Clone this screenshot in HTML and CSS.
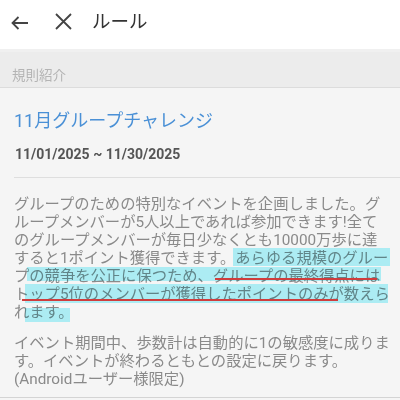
FILE: index.html
```html
<!DOCTYPE html>
<html lang="ja">
<head>
<meta charset="utf-8">
<link rel="stylesheet" href="styles.css">
</head>
<body>
<div class="app">
  <header class="topbar">
    <svg class="icon-back" width="18" height="14" viewBox="0 0 18 14">
      <path d="M17 7 H1.5 M7.5 1 L1.5 7 L7.5 13" fill="none" stroke="#444" stroke-width="1.8" stroke-linecap="butt" stroke-linejoin="miter"/>
    </svg>
    <svg class="icon-close" width="17" height="17" viewBox="0 0 17 17">
      <path d="M1 1 L16 16 M16 1 L1 16" fill="none" stroke="#444" stroke-width="1.8"/>
    </svg>
    <h1 class="title">ルール</h1>
  </header>
  <div class="section-label">規則紹介</div>
  <main class="content">
    <h2 class="event-name">11月グループチャレンジ</h2>
    <div class="event-date">11/01/2025 ~ 11/30/2025</div>
    <hr class="divider">
    <div class="para para-main">
      <div class="mark hl hl-a"></div>
      <div class="mark hl hl-b"></div>
      <div class="mark hl hl-c"></div>
      <div class="mark hl hl-d"></div>
      <div class="mark ul ul-a"></div>
      <div class="mark ul ul-b"></div>
      <div class="line">グループのための特別なイベントを企画しました。グ</div>
      <div class="line">ループメンバーが5人以上であれば参加できます!全て</div>
      <div class="line">のグループメンバーが毎日少なくとも10000万歩に達</div>
      <div class="line">すると1ポイント獲得できます。あらゆる規模のグルー</div>
      <div class="line">プの競争を公正に保つため、グループの最終得点には</div>
      <div class="line">トップ5位のメンバーが獲得したポイントのみが数えら</div>
      <div class="line">れます。</div>
    </div>
    <div class="para para-note">
      <div class="line">イベント期間中、歩数計は自動的に1の敏感度に成りま</div>
      <div class="line">す。イベントが終わるともとの設定に戻ります。</div>
      <div class="line">(Androidユーザー様限定)</div>
    </div>
  </main>
</div>
</body>
</html>
```
FILE: styles.css
```css
* { box-sizing: border-box; }
html, body { margin: 0; padding: 0; }
body {
  width: 400px;
  height: 400px;
  overflow: hidden;
  background: #f5f5f5;
  font-family: Roboto, "Noto Sans CJK JP", sans-serif;
}
.app { width: 400px; }

.topbar {
  height: 49px;
  background: #ffffff;
  display: flex;
  align-items: center;
  padding: 0 0 6px 11px;
}
.icon-back { display: block; margin-top: 3px; }
.icon-close { display: block; margin-left: 26px; }
.title {
  margin: 0 0 0 20px;
  font-size: 18.5px;
  font-weight: 400;
  color: #333333;
  line-height: 24px;
}

.section-label {
  height: 39px;
  background: #ececec;
  border-top: 3px solid #f0f0f0;
  border-bottom: 1px solid #dcdcdc;
  padding: 14px 0 0 12px;
  font-size: 13.5px;
  line-height: 18px;
  color: #b4b4b4;
}

.content {
  padding: 21px 0 0 0;
  border-bottom: 1px solid #d4d4d4;
  height: 310px;
}
.event-name {
  margin: 0 0 0 14px;
  font-size: 18px;
  font-weight: 400;
  line-height: 24px;
  color: #4a90d6;
}
.event-date {
  margin: 12px 0 0 15px;
  font-size: 14px;
  font-weight: 700;
  line-height: 18px;
  color: #555555;
}
.divider {
  margin: 14px 0 0 14px;
  border: 0;
  height: 1px;
  background: #dedede;
}
.para {
  position: relative;
  margin: 17px 0 0 14px;
  font-size: 15.3px;
  line-height: 18px;
  color: #8a8a8a;
}
.para-note { margin-top: 13px; }
.line { white-space: nowrap; }

.mark { position: absolute; }
.hl {
  background: #b3f6fd;
  mix-blend-mode: multiply;
  z-index: 1;
}
.hl-a { left: 219px; top: 53px; width: 157px; height: 18px; }
.hl-b { left: 13px; top: 72px; width: 354px; height: 14px; }
.hl-c { left: 11px; top: 89px; width: 363px; height: 19px; }
.hl-d { left: 11px; top: 113px; width: 45px; height: 14px; }
.ul {
  background: #cf3d3d;
  height: 2px;
  z-index: 2;
}
.ul-a { left: 201px; top: 83px; width: 162px; }
.ul-b { left: 8px; top: 104px; width: 316px; }
```
